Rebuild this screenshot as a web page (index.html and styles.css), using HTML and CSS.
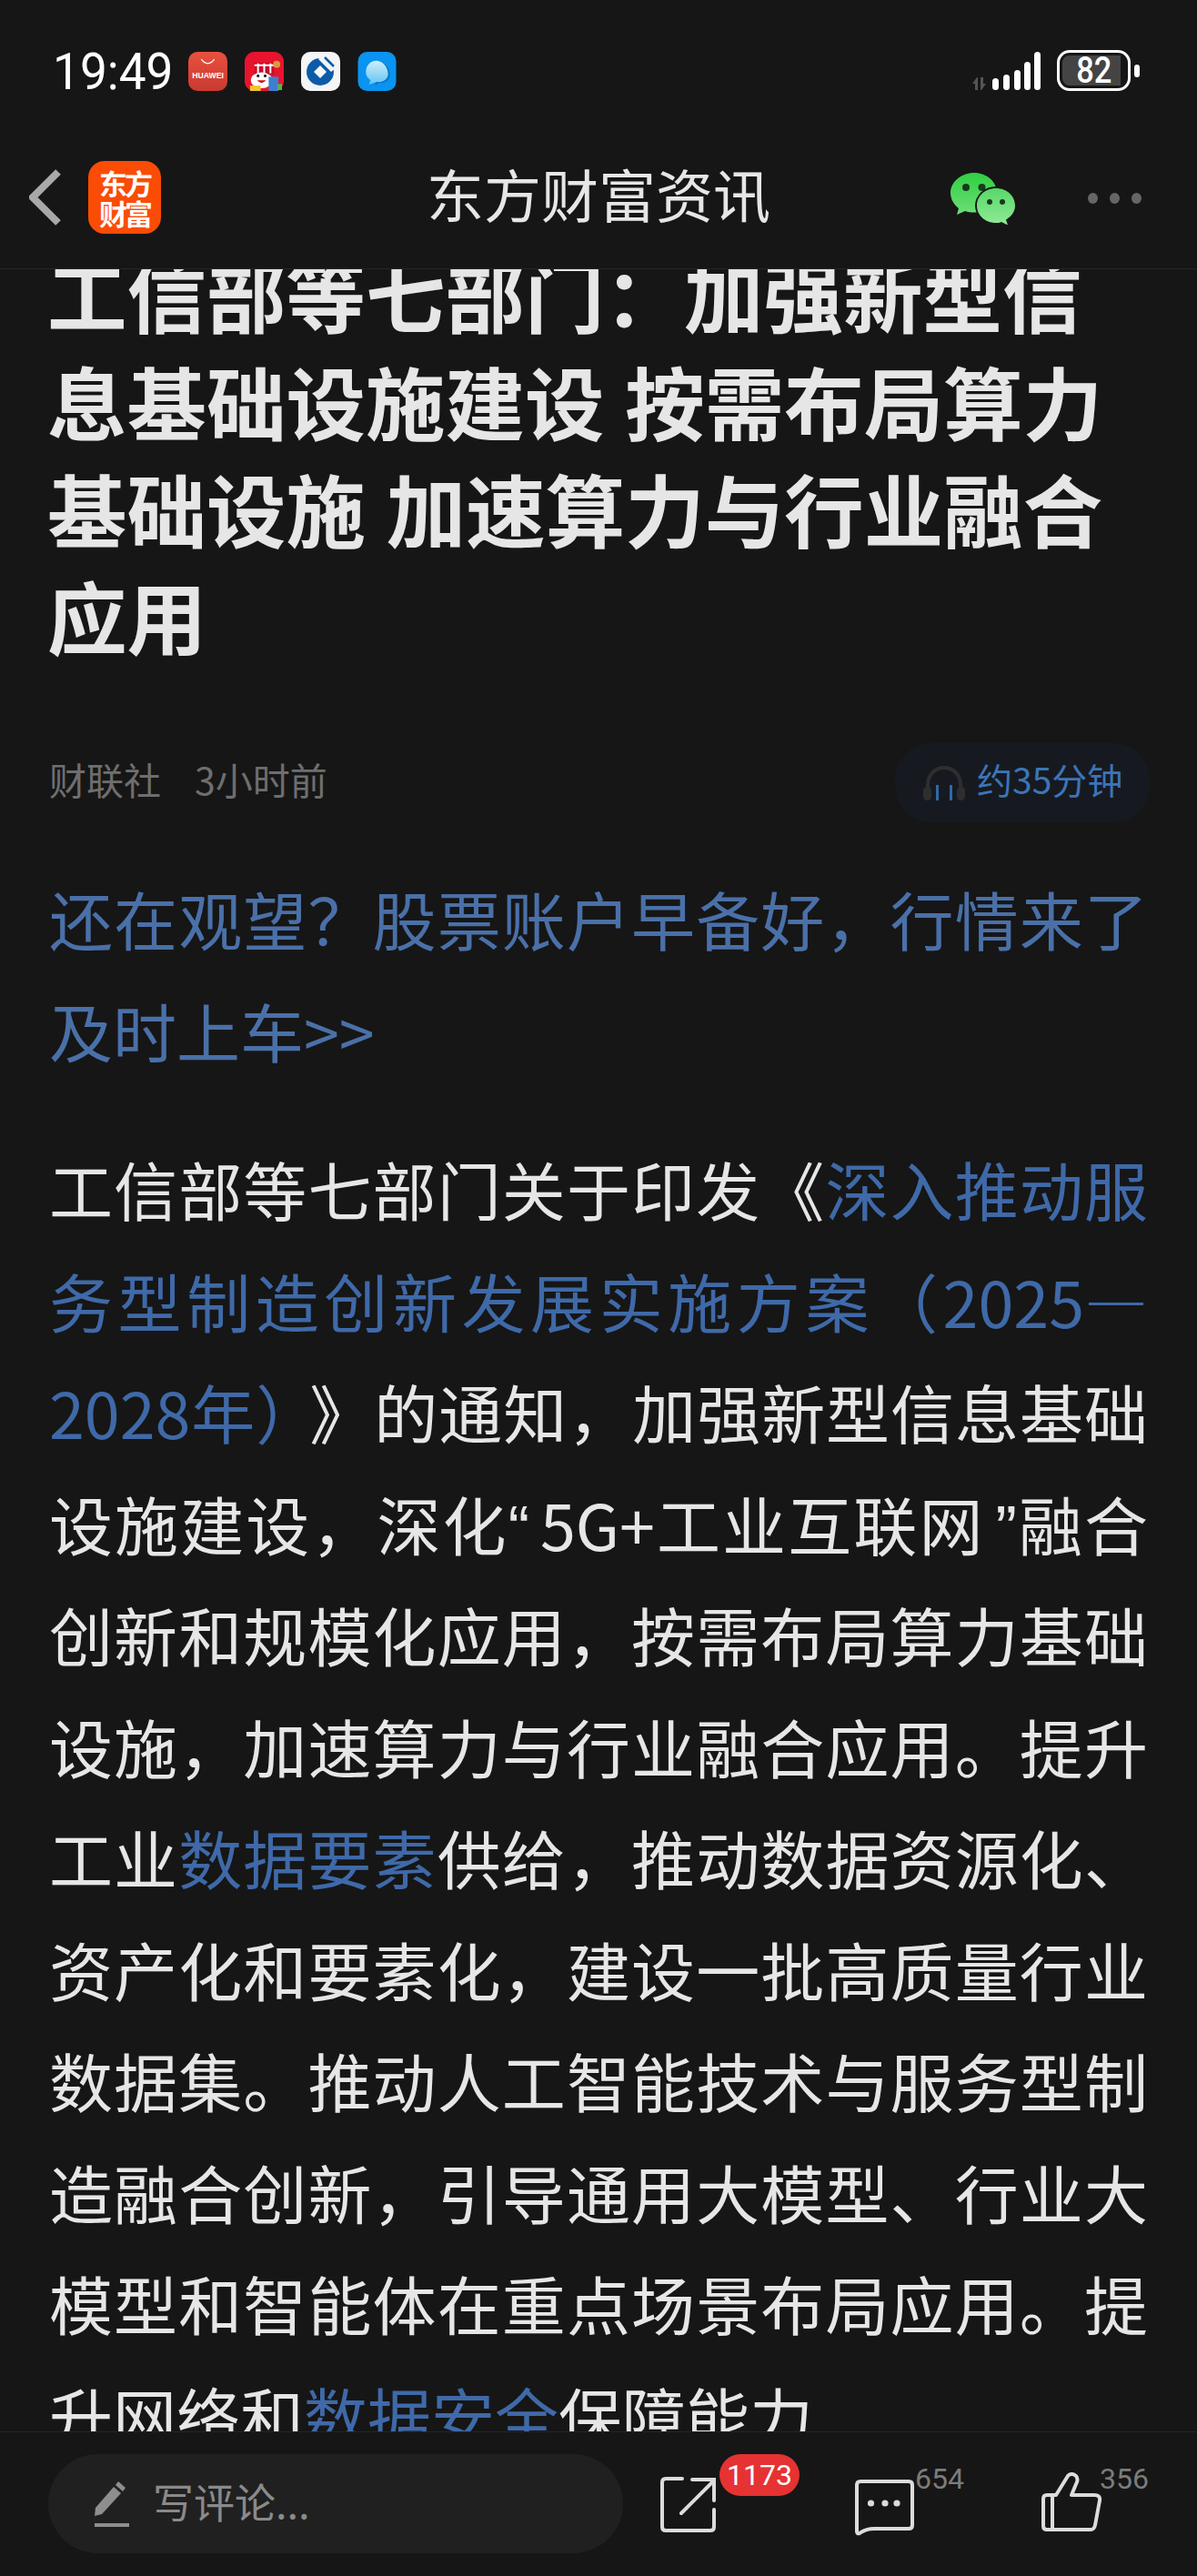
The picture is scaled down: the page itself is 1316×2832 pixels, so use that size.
FILE: index.html
```html
<!DOCTYPE html>
<html lang="zh-CN">
<head>
<meta charset="utf-8">
<title>东方财富资讯</title>
<link rel="stylesheet" href="styles.css">
</head>
<body>
<div class="page">
  <header class="top">
    <div class="status">
      <span class="time">19:49</span>
      <div class="apps">
        <svg class="app" viewBox="0 0 42 42"><defs><linearGradient id="hw" x1="0" y1="0" x2="0" y2="1"><stop offset="0" stop-color="#e8503f"/><stop offset="1" stop-color="#c93a30"/></linearGradient></defs><rect width="42" height="42" rx="10" fill="url(#hw)"/><path d="M14 8q7 9 14 0" fill="none" stroke="#fff" stroke-width="1.3"/><text x="21" y="28" text-anchor="middle" class="hwtext">HUAWEI</text></svg>
        <svg class="app" viewBox="0 0 44 44"><rect width="44" height="44" rx="11" fill="#e8142e"/><path d="M11 12h22v14H11z" fill="#c40f2a"/><path d="M15 13v11M22 13v11M29 13v11M11 15h22" stroke="#fff" stroke-width="2"/><ellipse cx="19" cy="32" rx="12" ry="9" fill="#fff"/><path d="M14 32q5 6 10 0z" fill="#d01020"/><circle cx="15" cy="27" r="1.6" fill="#222"/><circle cx="23" cy="27" r="1.6" fill="#222"/><rect x="27" y="28" width="11" height="16" fill="#3d7fd0"/><rect x="6" y="38" width="12" height="6" fill="#f4c430"/><rect x="37" y="36" width="5" height="7" fill="#5ab04a"/><circle cx="36" cy="14" r="4" fill="#d99a40"/></svg>
        <svg class="app" viewBox="0 0 43 43"><rect width="43" height="43" rx="10" fill="#f4f5f6"/><circle cx="21" cy="22" r="15" fill="#0c5ba8"/><path d="M21 15l7 7-7 7-7-7z" fill="#f4f5f6"/><path d="M24 4l14 14-5 4-14-14z" fill="#f4f5f6"/><path d="M26 6l10 10" stroke="#0c5ba8" stroke-width="2.5"/></svg>
        <svg class="app" viewBox="0 0 42 43"><defs><linearGradient id="ms" x1="0" y1="0" x2="0" y2="1"><stop offset="0" stop-color="#cdeefb"/><stop offset="1" stop-color="#62c4f2"/></linearGradient></defs><rect width="42" height="43" rx="10" fill="#0a93f0"/><path d="M33 26c-1 4-5 8-12 7l-4 3 0-4c-5-2-8-7-7-11 1-7 7-11 13-10 7 1 11 8 10 15z" fill="#0576cc" transform="translate(2 1)"/><path d="M33 26c-1 4-5 8-12 7l-9 3 2-5c-4-2-6-7-5-11 1-7 7-11 13-10 7 1 12 9 11 16z" fill="url(#ms)"/></svg>
      </div>
      <div class="sys">
        <svg class="signal" viewBox="0 0 76 42"><path d="M6 28l-5 7h3v7h3V28zM11 42l5-7h-3V28h-3v14z" fill="#555"/><rect x="23" y="29" width="7" height="13" rx="3.5" fill="#fff"/><rect x="35" y="25" width="7" height="17" rx="3.5" fill="#fff"/><rect x="47" y="20" width="7" height="22" rx="3.5" fill="#fff"/><rect x="58" y="11" width="7" height="31" rx="3.5" fill="#fff"/><rect x="69" y="0" width="7" height="42" rx="3.5" fill="#fff"/></svg>
        <div class="battery"><span class="level"></span><span class="pct">82</span></div>
        <span class="nub"></span>
      </div>
    </div>
    <nav class="bar">
      <svg class="back" viewBox="0 0 36 64"><path d="M32 4L4 32l28 28" fill="none" stroke="#a8a8a8" stroke-width="8"/></svg>
      <div class="logo"><span>东方</span><span>财富</span></div>
      <h1 class="nav-title">东方财富资讯</h1>
      <svg class="wechat" viewBox="0 0 72 58"><defs><linearGradient id="wa" x1="0" y1="0" x2="0" y2="1"><stop offset="0" stop-color="#2fcf42"/><stop offset="1" stop-color="#6ede78"/></linearGradient><linearGradient id="wb" x1="0" y1="0" x2="0" y2="1"><stop offset="0" stop-color="#58d868"/><stop offset="1" stop-color="#90ea98"/></linearGradient></defs><path d="M26 1C12 1 0 11 0 23c0 7 4 13 9 17l-2 7 9-4c3 1 6 1.500 10 1.500C40 44.500 51 35 51 23S40 1 26 1z" fill="url(#wa)"/><circle cx="17" cy="17" r="4" fill="#183a1c"/><circle cx="34.500" cy="17" r="4" fill="#183a1c"/><ellipse cx="50" cy="37" rx="23" ry="21" fill="#161616"/><path d="M50 18c-12 0-21 8.500-21 19s9 19 21 19c2.500 0 4 0 6-1l7 3.500-2-6c6-3.500 10-9 10-15.500 0-10.500-9-19-21-19z" fill="url(#wb)"/><circle cx="43" cy="33" r="3" fill="#183a1c"/><circle cx="57" cy="33" r="3" fill="#183a1c"/></svg>
      <div class="dots"><i></i><i></i><i></i></div>
    </nav>
  </header>

  <main class="content">
    <article class="article">
      <h2 class="headline">工信部等七部门：加强新型信息基础设施建设 按需布局算力基础设施 加速算力与行业融合应用</h2>
      <div class="meta">
        <div class="source"><span>财联社</span><span>3小时前</span></div>
        <div class="listen">
          <svg class="phones" viewBox="0 0 46 40"><path d="M5 26V22C5 11 13 3 23 3s18 8 18 19v4" fill="none" stroke="#2e2e2e" stroke-width="4"/><rect x="0" y="24" width="9" height="15" rx="4.500" fill="#2e2e2e"/><rect x="37" y="24" width="9" height="15" rx="4.500" fill="#2e2e2e"/><rect x="14" y="22" width="3" height="17" fill="#2f68ad"/><rect x="29" y="22" width="3" height="17" fill="#2f68ad"/></svg>
          <span class="listen-text">约35分钟</span>
        </div>
      </div>
      <p class="para promo">还在观望？股票账户早备好，行情来了及时上车&gt;&gt;</p>
      <p class="para">工信部等七部门关于印发《<a class="link">深入推动服务型制造创新发展实施方案（2025—2028年）</a><span class="close">》</span>的通知，加强新型信息基础设施建设，深化<span class="q ql">“</span>5G+工业互联网<span class="q qr">”</span>融合创新和规模化应用，按需布局算力基础设施，加速算力与行业融合应用。提升工业<a class="link">数据要素</a>供给，推动数据资源化、资产化和要素化，建设一批高质量行业数据集。推动人工智能技术与服务型制造融合创新，引导通用大模型、行业大模型和智能体在重点场景布局应用。提升网络和<a class="link">数据安全</a>保障能力</p>
    </article>
  </main>

  <footer class="foot">
    <div class="input">
      <svg class="pen" viewBox="0 0 38 50"><path d="M0 38l1-9L21 6l8 7L8 36z" fill="#8e8e8e"/><path d="M23 4l3-4 8 7-3 4z" fill="#8e8e8e"/><rect y="46" width="38" height="4" fill="#8e8e8e"/></svg>
      <span class="input-text">写评论...</span>
    </div>
    <div class="action share">
      <svg viewBox="0 0 63 63"><path d="M25 3H7Q3 3 3 7V56Q3 60 7 60H56Q60 60 60 56V37M24 41L60 5M36 4H60V27" fill="none" stroke="#dcdcdc" stroke-width="4" stroke-linecap="round"/></svg>
      <span class="badge">1173</span>
    </div>
    <div class="action comment">
      <svg viewBox="0 0 67 63"><path d="M7 3H60Q64 3 64 7V51Q64 55 60 55H22C13 55 9 58 6 60Q3 61 3 58V7Q3 3 7 3Z" fill="none" stroke="#dcdcdc" stroke-width="4"/><circle cx="18.500" cy="27" r="3.600" fill="#dcdcdc"/><circle cx="34" cy="27" r="3.600" fill="#dcdcdc"/><circle cx="47" cy="27" r="3.600" fill="#dcdcdc"/></svg>
      <span class="count">654</span>
    </div>
    <div class="action like">
      <svg viewBox="0 0 66 66"><path d="M16 25L29 4Q33 0 38 4Q41 8 38 13L33 25H58Q65 25 64 31L59 58Q58 63 54 63H6Q2 63 2 59V29Q2 25 6 25ZM12 25V63" fill="none" stroke="#dcdcdc" stroke-width="4" stroke-linejoin="round"/></svg>
      <span class="count">356</span>
    </div>
  </footer>
</div>
</body>
</html>
```

FILE: styles.css
```css
* { box-sizing: border-box; }
html, body { margin: 0; padding: 0; background: #161616; }
body { font-family: "Noto Sans CJK SC", "Noto Sans", sans-serif; color: #e6e6e6; }
.page { width: 1316px; height: 2832px; display: flex; flex-direction: column; overflow: hidden; }

.top { flex: none; height: 296px; border-bottom: 1px solid #262626; }
.status { height: 160px; display: flex; align-items: flex-start; padding: 55px 0 0 58px; }
.time { width: 149px; font: 400 56px/48px Roboto, sans-serif; color: #fff; white-space: nowrap; transform: scaleX(.95); transform-origin: left center; }
.apps { display: flex; gap: 19px; }
.app { width: 43px; height: 43px; display: block; margin-top: 2px; }
.sys { margin-left: auto; display: flex; align-items: flex-start; padding-right: 63px; }
.signal { width: 76px; height: 42px; margin-top: 2px; }
.battery { position: relative; width: 81px; height: 45px; margin-left: 18px; border: 3px solid #fff; border-radius: 14px; overflow: hidden; display: flex; align-items: center; justify-content: center; }
.level { position: absolute; left: 3px; top: 3px; bottom: 3px; width: 64px; background: #444; border-radius: 8px 0 0 8px; }
.pct { position: relative; font: 500 40px/36px "Roboto", sans-serif; color: #fff; transform: scaleX(.86); }
.nub { width: 6px; height: 14px; margin: 16px 0 0 4px; background: #fff; border-radius: 3px; }

.bar { position: relative; height: 135px; display: flex; align-items: flex-start; padding: 17px 0 0 32px; }
.back { width: 36px; height: 64px; margin-top: 8px; }
.logo { width: 80px; height: 80px; margin-left: 29px; background: #fa4c05; border-radius: 18px; display: flex; flex-direction: column; align-items: center; justify-content: center; color: #fff; font-size: 31px; line-height: 33px; font-weight: 700; letter-spacing: -3px; }
.logo span { display: block; }
.nav-title { position: absolute; left: 0; right: 0; top: 13px; margin: 0; text-align: center; font-size: 63px; line-height: 78px; font-weight: 400; color: #e6e6e6; }
.wechat { width: 72px; height: 58px; margin: 12px 0 0 auto; }
.dots { display: flex; gap: 13px; margin: 35px 61px 0 79px; }
.dots i { width: 11px; height: 12px; border-radius: 50%; background: #666; }

.content { flex: 1; min-height: 0; overflow: hidden; }
.article { margin-top: -33px; padding: 0 54px; }
.headline { margin: 0 0 0 -2px; font-size: 87.5px; line-height: 118px; font-weight: 700; word-spacing: 3px; color: #e6e6e6; }
.meta { display: flex; justify-content: space-between; align-items: center; margin: 82px -2px 0 0; height: 87px; }
.source { display: flex; gap: 37px; font-size: 41px; line-height: 60px; color: #6e6e6e; margin-top: -9px; }
.listen { display: flex; align-items: center; gap: 13px; width: 280px; height: 87px; padding-left: 31px; background: #161a20; border-radius: 40px; color: #3d74b8; font-size: 39px; white-space: nowrap; }
.listen-text { line-height: 60px; margin-top: -9px; }
.phones { width: 46px; height: 40px; }
.para { margin: 0; font-size: 70px; line-height: 122.5px; text-align: justify; color: #e6e6e6; }
.promo { margin: 45px 0 52px; color: #4a70a8; }
.link { color: #3f69a8; }
.close { padding-left: 23px; }
.q { font-family: "Liberation Sans", sans-serif; line-height: 1; }
.ql { padding-right: 12px; }
.qr { padding-left: 12px; }

.foot { position: relative; flex: none; height: 159px; border-top: 1px solid #262626; display: flex; align-items: flex-start; padding: 24px 0 0 53px; background: #161616; }
.input { width: 632px; height: 109px; border-radius: 55px; background: #202020; display: flex; align-items: center; padding-left: 51px; gap: 26px; color: #8a8a8a; font-size: 45px; }
.input-text { line-height: 60px; margin-top: -6px; }
.pen { width: 38px; height: 50px; }
.action { position: relative; flex: none; }
.action svg { display: block; }
.share { margin: 24px 0 0 40px; }
.share svg { width: 63px; height: 63px; }
.badge { position: absolute; left: 66px; top: -24px; width: 88px; height: 46px; border-radius: 23px; background: #e63232; color: #fff; font: 400 32px/46px Roboto, sans-serif; text-align: center; }
.comment { margin: 27px 0 0 151px; }
.comment svg { width: 67px; height: 63px; }
.like { margin: 20px 0 0 139px; }
.like svg { width: 66px; height: 66px; }
.count { position: absolute; font: 400 32px/1 Roboto, sans-serif; color: #7c7c7c; }
.comment .count { left: 67px; top: -16px; }
.like .count { left: 64px; top: -9px; }
.hwtext { font: 700 8.500px "Liberation Sans", sans-serif; fill: #fff; }
```
